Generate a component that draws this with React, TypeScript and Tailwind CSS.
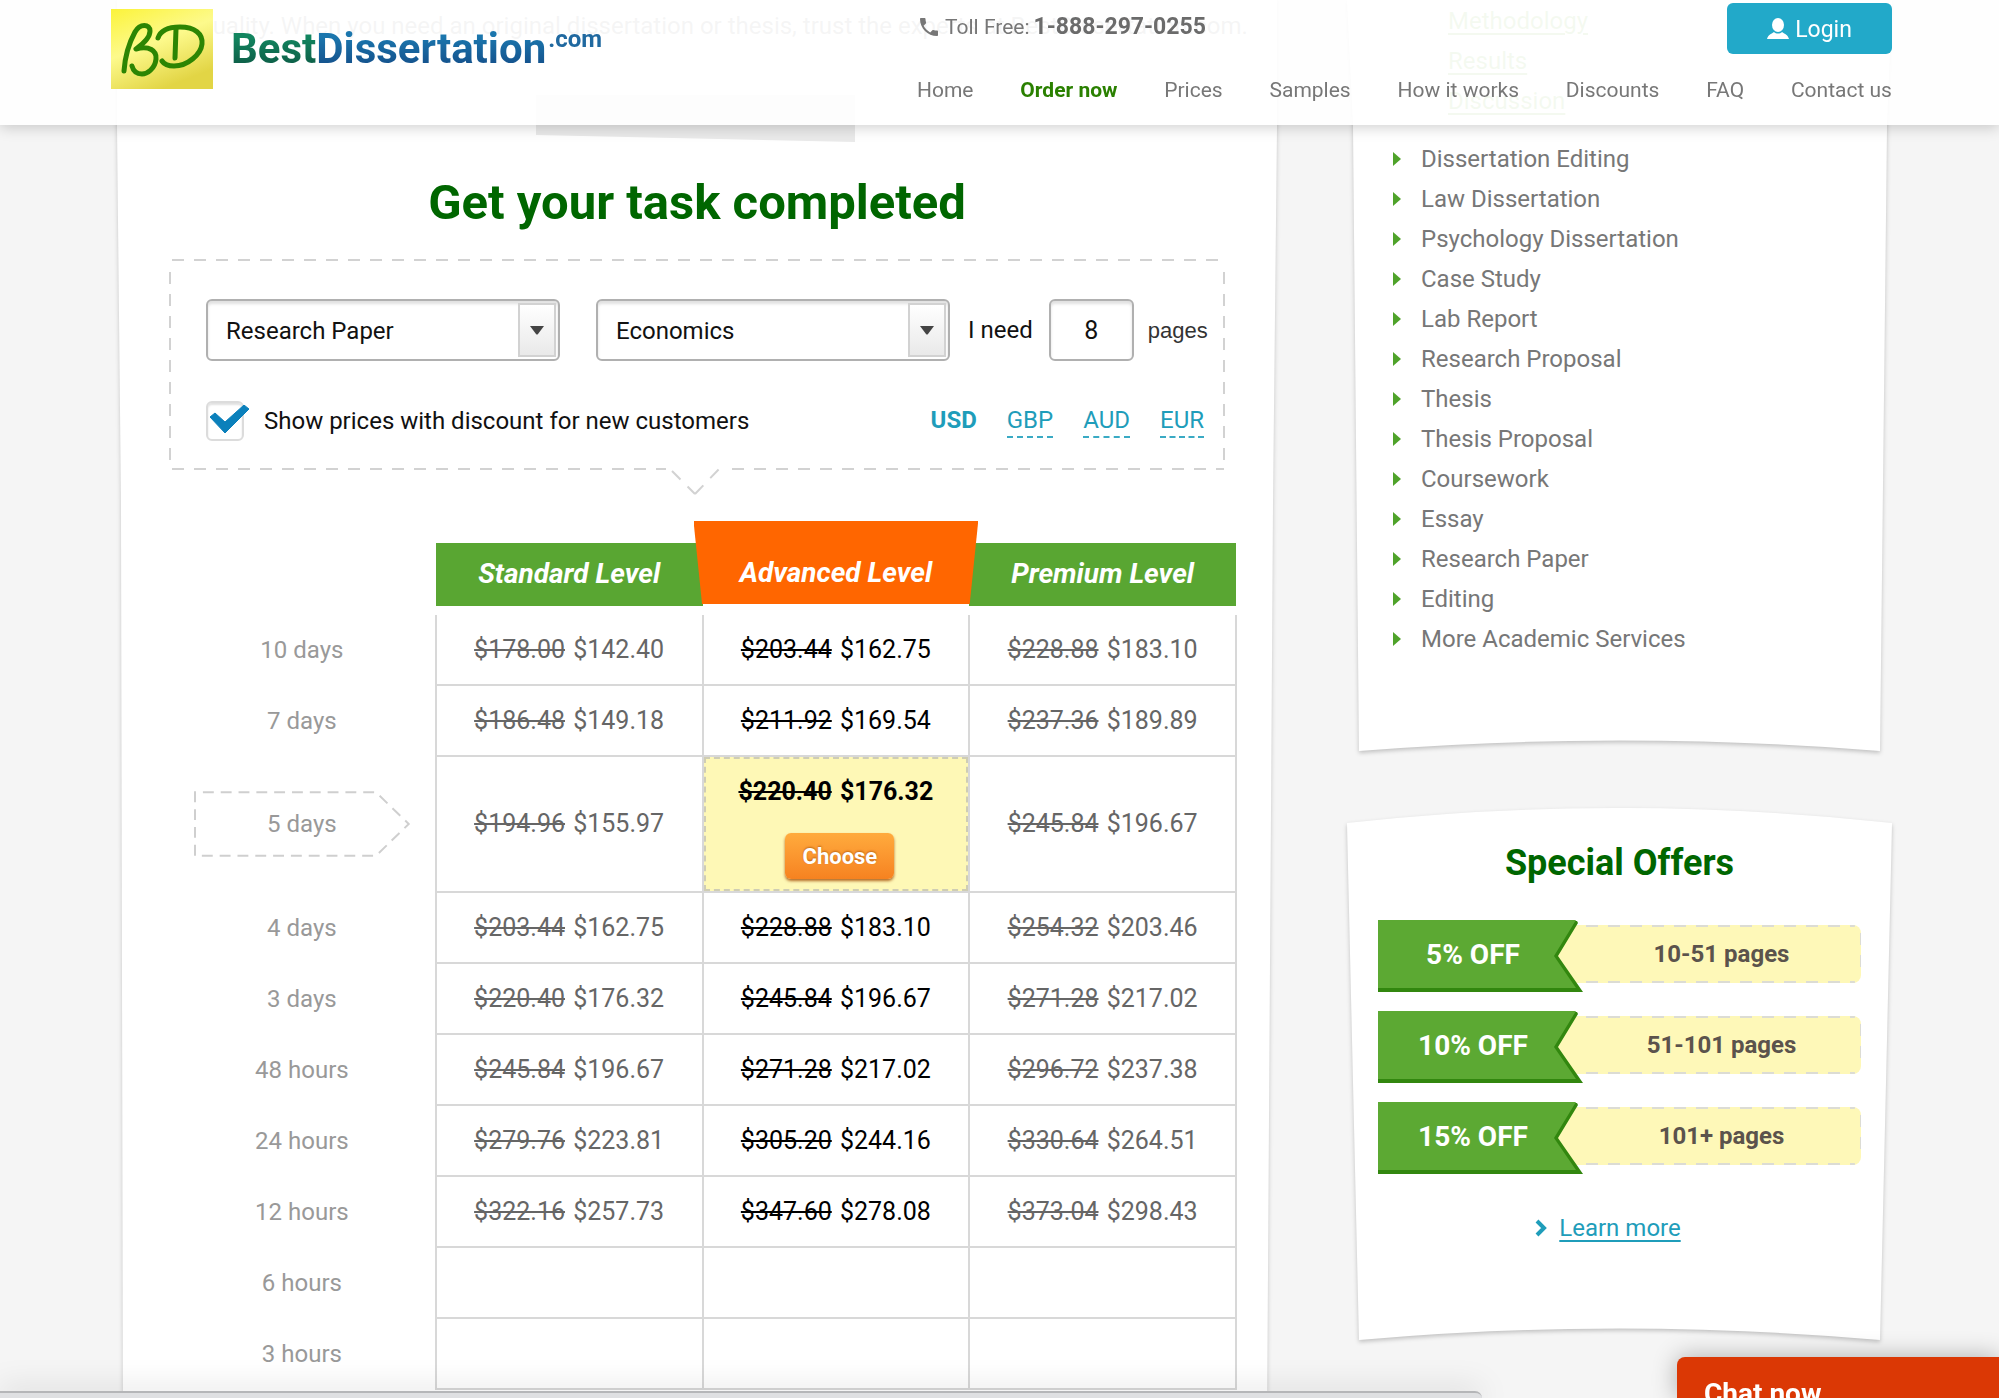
import { useState } from 'react';
import type { ReactNode } from 'react';
import clsx from 'clsx';
import { MdPhone } from 'react-icons/md';

const NAV = ['Home', 'Order now', 'Prices', 'Samples', 'How it works', 'Discounts', 'FAQ', 'Contact us'];

const CHAPTERS = ['Methodology', 'Results', 'Discussion'];

const SERVICES = [
  'Dissertation Editing',
  'Law Dissertation',
  'Psychology Dissertation',
  'Case Study',
  'Lab Report',
  'Research Proposal',
  'Thesis',
  'Thesis Proposal',
  'Coursework',
  'Essay',
  'Research Paper',
  'Editing',
  'More Academic Services',
];

const CURRENCIES = ['USD', 'GBP', 'AUD', 'EUR'];

type Price = [full: string, discounted: string];

const ROWS: { label: string; prices: Price[] }[] = [
  { label: '10 days', prices: [['$178.00', '$142.40'], ['$203.44', '$162.75'], ['$228.88', '$183.10']] },
  { label: '7 days', prices: [['$186.48', '$149.18'], ['$211.92', '$169.54'], ['$237.36', '$189.89']] },
  { label: '5 days', prices: [['$194.96', '$155.97'], ['$220.40', '$176.32'], ['$245.84', '$196.67']] },
  { label: '4 days', prices: [['$203.44', '$162.75'], ['$228.88', '$183.10'], ['$254.32', '$203.46']] },
  { label: '3 days', prices: [['$220.40', '$176.32'], ['$245.84', '$196.67'], ['$271.28', '$217.02']] },
  { label: '48 hours', prices: [['$245.84', '$196.67'], ['$271.28', '$217.02'], ['$296.72', '$237.38']] },
  { label: '24 hours', prices: [['$279.76', '$223.81'], ['$305.20', '$244.16'], ['$330.64', '$264.51']] },
  { label: '12 hours', prices: [['$322.16', '$257.73'], ['$347.60', '$278.08'], ['$373.04', '$298.43']] },
  { label: '6 hours', prices: [] },
  { label: '3 hours', prices: [] },
];

const SELECTED_ROW = '5 days';

const OFFERS = [
  { off: '5% OFF', pages: '10-51 pages' },
  { off: '10% OFF', pages: '51-101 pages' },
  { off: '15% OFF', pages: '101+ pages' },
];

function Logo() {
  return (
    <a href="#" className="flex items-start pt-[9px]" aria-label="BestDissertation.com">
      <svg width="102" height="80" viewBox="0 0 102 80" fill="none" aria-hidden="true">
        <defs>
          <linearGradient id="logo-bg" x1="0" y1="0" x2="0.5" y2="1">
            <stop offset="0" stopColor="#fbf33a" />
            <stop offset="0.5" stopColor="#fdfa8c" />
            <stop offset="1" stopColor="#e2d545" />
          </linearGradient>
        </defs>
        <rect width="102" height="80" fill="url(#logo-bg)" />
        <g stroke="#2c8503" strokeWidth="5" strokeLinecap="round" strokeLinejoin="round">
          <path d="M13 62C14 48 18 34 24 23C29 14 39 15 39 22C39 29 32 35 25 40C38 36 46 42 45 50C44 60 36 65 31 65C25 65 22 61 21 57" />
          <path d="M47 29C50 20 59 18 69 18C84 18 92 25 91 35C90 45 77 57 63 57C57 57 53 55 51 52" />
          <path d="M65 20L64 49" />
        </g>
      </svg>
      <span className="ml-[18px] flex items-start pt-[10px] font-bold">
        <span className="bg-linear-to-b from-[#12855f] from-30% to-[#0d5c46] to-80% bg-clip-text text-[42px] leading-[60px] text-transparent">
          Best
        </span>
        <span className="bg-linear-to-b from-[#1b76ad] from-30% to-[#144f8a] to-80% bg-clip-text text-[42px] leading-[60px] text-transparent">
          Dissertation
        </span>
        <span className="ml-0.5 pt-[6px] text-[24px] leading-7 text-[#2069a0]">.com</span>
      </span>
    </a>
  );
}

function Header() {
  return (
    <header className="fixed inset-x-0 top-0 z-20 flex h-[125px] justify-between bg-white/90 pr-[107px] pl-[111px] shadow-[0_2px_14px_rgba(0,0,0,0.2)]">
      <Logo />
      <div className="w-[975px]">
        <div className="flex items-start justify-between pt-[3px]">
          <p className="flex items-center pt-2 text-[21px] leading-8 text-[#777]">
            <MdPhone size={24} aria-hidden="true" />
            <span className="ml-1">Toll Free:</span>
            <strong className="ml-1 text-[23px] text-[#6b6b6b]">1-888-297-0255</strong>
          </p>
          <button
            type="button"
            className="flex h-[51px] w-[165px] items-center justify-center gap-1.5 rounded-md bg-[#22a9c9] pt-1 text-[23px] text-white"
          >
            <svg width="22" height="22" viewBox="0 0 22 22" fill="currentColor" className="-mt-1" aria-hidden="true">
              <ellipse cx="11" cy="7" rx="6" ry="7" />
              <path d="M0 21C1 17 4 16 7 14C9 16 13 16 15 14C18 16 21 17 22 21Z" />
            </svg>
            Login
          </button>
        </div>
        <nav className="mt-5 flex justify-between text-[21px] leading-8 text-[#777]">
          {NAV.map((item) => (
            <a key={item} href="#" className={clsx(item === 'Order now' && 'font-bold text-[#2a8000]')}>
              {item}
            </a>
          ))}
        </nav>
      </div>
    </header>
  );
}

interface SelectBoxProps {
  label: string;
  value: string;
  options: string[];
  onChange: (value: string) => void;
}

function SelectBox({ label, value, options, onChange }: SelectBoxProps) {
  return (
    <div className="relative w-[354px] shrink-0">
      <select
        aria-label={label}
        value={value}
        onChange={(e) => onChange(e.target.value)}
        className="h-[62px] w-full appearance-none rounded-md border-2 border-[#b0b0b0] bg-white pt-0.5 pr-12 pl-[18px] text-[24px] text-[#111] shadow-[inset_0_3px_3px_rgba(0,0,0,0.12)]"
      >
        {options.map((option) => (
          <option key={option}>{option}</option>
        ))}
      </select>
      <span className="pointer-events-none absolute top-1 right-1 bottom-1 flex w-[38px] items-center justify-center border-2 border-[#d2d2d2] bg-linear-to-b from-white to-[#e9e9e9]">
        <svg width="14" height="9" viewBox="0 0 14 9" fill="#444" aria-hidden="true">
          <path d="M0 0H14L8 8Q7 9 6 8Z" />
        </svg>
      </span>
    </div>
  );
}

function CalculatorForm() {
  const [paper, setPaper] = useState('Research Paper');
  const [subject, setSubject] = useState('Economics');
  const [pages, setPages] = useState('8');
  const [discount, setDiscount] = useState(true);
  const [currency, setCurrency] = useState('USD');

  return (
    <form className="relative mx-[53px] mt-[29px] pt-[39px] pr-5 pb-7 pl-9 text-[24px] text-[#111]">
      {/* Dashed outline with the pointer towards the table */}
      <svg
        className="pointer-events-none absolute inset-0 size-full overflow-visible"
        stroke="#d2d2d2"
        strokeWidth="2"
        strokeDasharray="12 10"
        fill="none"
        aria-hidden="true"
      >
        <line x1="2" y1="0" x2="100%" y2="0" />
        <line x1="0" y1="12" x2="0" y2="100%" />
        <line x1="100%" y1="12" x2="100%" y2="100%" />
        <line x1="2" y1="100%" x2="496" y2="100%" />
        <line x1="562" y1="100%" x2="100%" y2="100%" />
        <svg y="100%" overflow="visible">
          <path d="M502 2L525 25M525 25L550 -1" />
        </svg>
      </svg>

      <div className="flex items-center">
        <SelectBox label="Type of paper" value={paper} options={['Research Paper', 'Essay', 'Thesis']} onChange={setPaper} />
        <div className="ml-9">
          <SelectBox label="Subject" value={subject} options={['Economics', 'History', 'Law']} onChange={setSubject} />
        </div>
        <label htmlFor="pages" className="ml-[18px] whitespace-nowrap">
          I need
        </label>
        <input
          id="pages"
          value={pages}
          onChange={(e) => setPages(e.target.value)}
          className="ml-4 h-[62px] w-[85px] shrink-0 rounded-md border-2 border-[#b0b0b0] bg-white text-center text-[25px] shadow-[inset_0_3px_3px_rgba(0,0,0,0.12)]"
        />
        <span className="ml-[14px] font-['Liberation_Sans',sans-serif] text-[22px] text-[#333]">pages</span>
      </div>

      <div className="mt-10 flex h-10 items-center">
        <label className="relative flex items-center">
          <input
            type="checkbox"
            checked={discount}
            onChange={(e) => setDiscount(e.target.checked)}
            className="h-10 w-[38px] appearance-none rounded-md border-2 border-[#dcdcdc] bg-white shadow-[inset_0_2px_2px_rgba(0,0,0,0.12)]"
          />
          {discount && (
            <svg
              className="pointer-events-none absolute top-1 left-1"
              width="40"
              height="30"
              viewBox="0 0 40 30"
              fill="none"
              aria-hidden="true"
            >
              <path d="M0 12L5 8L15 17L34 0L39 4L15 28Z" fill="#0b80bb" stroke="#0b80bb" strokeLinejoin="round" />
            </svg>
          )}
          <span className="ml-5">Show prices with discount for new customers</span>
        </label>
        <div className="ml-auto flex gap-[30px] text-[#1f9dba]">
          {CURRENCIES.map((code) => (
            <button
              key={code}
              type="button"
              onClick={() => setCurrency(code)}
              className={clsx(
                'border-b-2 leading-8',
                code === currency ? 'border-transparent font-bold' : 'border-dashed border-[#3aaac4]',
              )}
            >
              {code}
            </button>
          ))}
        </div>
      </div>
    </form>
  );
}

function PricePair({ price }: { price: Price }) {
  return (
    <>
      <s className="decoration-2">{price[0]}</s> <span className="ml-0.5">{price[1]}</span>
    </>
  );
}

function LevelHead({ children, featured = false }: { children: ReactNode; featured?: boolean }) {
  return (
    <th scope="col" className="p-0 align-bottom">
      {featured ? (
        <span className="relative z-10 -mx-[9px] mb-[11px] block h-[83px] bg-[#ff6600] pt-[22px] leading-[60px] [clip-path:polygon(0_0,100%_0,97%_100%,3%_100%)]">
          {children}
        </span>
      ) : (
        <span className="mb-[9px] block h-[63px] bg-[#59a632] leading-[62px]">{children}</span>
      )}
    </th>
  );
}

function PriceTable() {
  return (
    <table className="mt-[52px] mr-[40px] ml-[52px] w-[1068px] table-fixed border-collapse text-center text-[24px]">
      <thead>
        <tr className="h-[94px] text-[28px] text-white italic">
          <td />
          <LevelHead>Standard Level</LevelHead>
          <LevelHead featured>Advanced Level</LevelHead>
          <LevelHead>Premium Level</LevelHead>
        </tr>
      </thead>
      <tbody>
        {ROWS.map((row, i) => {
          const selected = row.label === SELECTED_ROW;
          return (
            <tr key={row.label} className={clsx(selected ? 'h-[136px]' : i === 0 ? 'h-[70px]' : 'h-[71px]')}>
              <th scope="row" className="p-0 font-normal text-[#999]">
                {selected ? (
                  <span className="relative mx-[26px] block h-16 leading-[64px]">
                    <svg
                      className="absolute inset-0 size-full overflow-visible"
                      viewBox="0 0 216 64"
                      fill="none"
                      stroke="#cfcfcf"
                      strokeWidth="2"
                      strokeDasharray="11 7"
                      aria-hidden="true"
                    >
                      <path d="M0 64V0H183L216 32L183 64H0" />
                    </svg>
                    {row.label}
                  </span>
                ) : (
                  row.label
                )}
              </th>
              {[0, 1, 2].map((col) => {
                const price = row.prices[col];
                const chosen = selected && col === 1;
                return (
                  <td
                    key={col}
                    className={clsx(
                      'border-2 border-[#d8d8d8] p-0 text-[25px]',
                      i === 0 && 'border-t-0',
                      col === 1 ? 'text-black' : 'text-[#666]',
                      chosen && 'bg-[#fef8b6]',
                    )}
                  >
                    {chosen ? (
                      <div className="flex h-[134px] flex-col items-center border-2 border-dashed border-[#cfcdb4] pt-[17px] font-bold">
                        <p className="leading-8">
                          <PricePair price={price} />
                        </p>
                        <button
                          type="button"
                          className="mt-[25px] ml-2 h-[46px] w-[109px] rounded-md bg-linear-to-b from-[#ffab3d] to-[#f68220] text-[22px] text-white shadow-[0_2px_3px_rgba(160,70,0,0.8)] [text-shadow:0_-1px_2px_rgba(150,70,0,0.6)]"
                        >
                          Choose
                        </button>
                      </div>
                    ) : (
                      price && <PricePair price={price} />
                    )}
                  </td>
                );
              })}
            </tr>
          );
        })}
      </tbody>
    </table>
  );
}

// Paper sheet behind a sidebar block: sides lean inwards, bottom edge bows up
function Sheet({ d, viewBox }: { d: string; viewBox: string }) {
  return (
    <svg
      className="absolute inset-0 -z-10 size-full overflow-visible drop-shadow-[0_2px_2px_rgba(0,0,0,0.22)]"
      viewBox={viewBox}
      preserveAspectRatio="none"
      fill="#fff"
      aria-hidden="true"
    >
      <path d={d} />
    </svg>
  );
}

function ServicesBlock() {
  return (
    <section className="relative z-0 pb-[94px] pl-[46px] text-[24px] leading-10">
      <Sheet viewBox="0 0 545 753" d="M0 0H545L540 125L533 751Q272 730 12 751L6 125Z" />
      <ul className="pt-px pl-[55px]">
        {CHAPTERS.map((item) => (
          <li key={item}>
            <a href="#" className="text-[#8fc46a] underline underline-offset-4">
              {item}
            </a>
          </li>
        ))}
      </ul>
      <ul className="mt-[18px]">
        {SERVICES.map((item) => (
          <li key={item} className="flex items-center">
            <svg width="8" height="14" viewBox="0 0 8 14" fill="#4fa32a" aria-hidden="true">
              <path d="M0 0L8 7L0 14Z" />
            </svg>
            <a href="#" className="ml-5 text-[#777]">
              {item}
            </a>
          </li>
        ))}
      </ul>
    </section>
  );
}

function OffersBlock() {
  return (
    <section className="relative z-0 mt-[55px] px-[31px] pt-[35px] pb-[97px]">
      <Sheet viewBox="0 0 545 533" d="M0 15Q272 -15 545 15L533 532Q272 509 12 532Z" />
      <h2 className="text-center text-[36px] leading-10 font-bold text-[#006600]">Special Offers</h2>
      <ul className="mt-[37px] flex flex-col gap-[19px]">
        {OFFERS.map(({ off, pages }) => (
          <li key={off} className="flex items-start font-bold">
            <span className="relative z-10 flex h-[72px] w-[205px] items-center pb-0.5 text-white">
              <svg className="absolute inset-0 -z-10" width="205" height="72" viewBox="0 0 205 72" aria-hidden="true">
                <path d="M0 1H199L200 3L180 36L205 72H0Z" fill="#32870f" />
                <path d="M0 0H198L176 36L198 68H0Z" fill="#5ca933" />
              </svg>
              <span className="w-[190px] text-center text-[28px]">{off}</span>
            </span>
            <span className="relative mt-[5px] -ml-[27px] flex h-[58px] flex-1 items-center justify-center rounded-lg bg-[#fef8b8] pl-[26px] text-[24px] text-[#5b534c]">
              <svg className="absolute inset-0 size-full" fill="none" aria-hidden="true">
                <g stroke="#dcdcd4" strokeWidth="2" strokeDasharray="12 10">
                  <line x1="30" y1="1" x2="98%" y2="1" />
                  <line x1="30" y1="57" x2="98%" y2="57" />
                  <line x1="100%" y1="8" x2="100%" y2="52" />
                </g>
              </svg>
              {pages}
            </span>
          </li>
        ))}
      </ul>
      <p className="mt-[38px] flex items-center justify-center text-[24px] leading-8 text-[#1f9dba]">
        <svg width="13" height="18" viewBox="0 0 13 18" fill="none" aria-hidden="true">
          <path d="M3 2L10 9L3 16" stroke="currentColor" strokeWidth="4" />
        </svg>
        <a href="#" className="mr-6 ml-3 underline underline-offset-4">
          Learn more
        </a>
      </p>
    </section>
  );
}

export default function App() {
  return (
    <div className="relative min-h-screen overflow-hidden bg-[#f5f5f5] font-['Roboto','Liberation_Sans',sans-serif] text-[#666]">
      <Header />

      <div className="flex gap-[70px] pr-[107px] pl-[117px]">
        <main className="relative z-0 min-w-0 flex-1 pb-2">
          <svg
            className="absolute inset-0 -z-10 size-full overflow-visible drop-shadow-[0_0_2px_rgba(0,0,0,0.2)]"
            viewBox="0 0 1160 1398"
            preserveAspectRatio="none"
            fill="#fff"
            aria-hidden="true"
          >
            <path d="M0 0H1160V125L1156 500L1150 1420H6L4 500L0 125Z" />
          </svg>
          <p className="h-[95px] pt-[10px] pl-[82px] text-[24px] leading-8 whitespace-nowrap text-[#999]">
            quality. When you need an original dissertation or thesis, trust the experts at BestDissertation.com.
          </p>
          <div className="ml-[419px] h-[47px] w-[319px] bg-[#eaeaea] [clip-path:polygon(0_0,100%_0,100%_100%,0_85%)]" />
          <h1 className="mt-[33px] text-center text-[49px] leading-14 font-bold text-[#006600]">
            Get your task completed
          </h1>
          <CalculatorForm />
          <PriceTable />
        </main>

        <aside className="w-[545px] shrink-0">
          <ServicesBlock />
          <OffersBlock />
        </aside>
      </div>

      {/* Status bar and chat tab */}
      <div className="fixed bottom-0 left-0 z-20 h-[7px] w-[1482px] rounded-tr-lg border-t-2 border-[#b5b6b8] bg-[#dfe0e2] shadow-[0_0_30px_rgba(0,0,0,0.25)]" />
      <button
        type="button"
        className="fixed right-0 bottom-0 z-30 flex h-[41px] w-[322px] items-start overflow-hidden rounded-tl-lg bg-[#db3805] pt-[21px] pl-[27px] text-[28px] leading-8 font-bold text-white shadow-[0_0_24px_rgba(0,0,0,0.3)]"
      >
        Chat now
      </button>
    </div>
  );
}
